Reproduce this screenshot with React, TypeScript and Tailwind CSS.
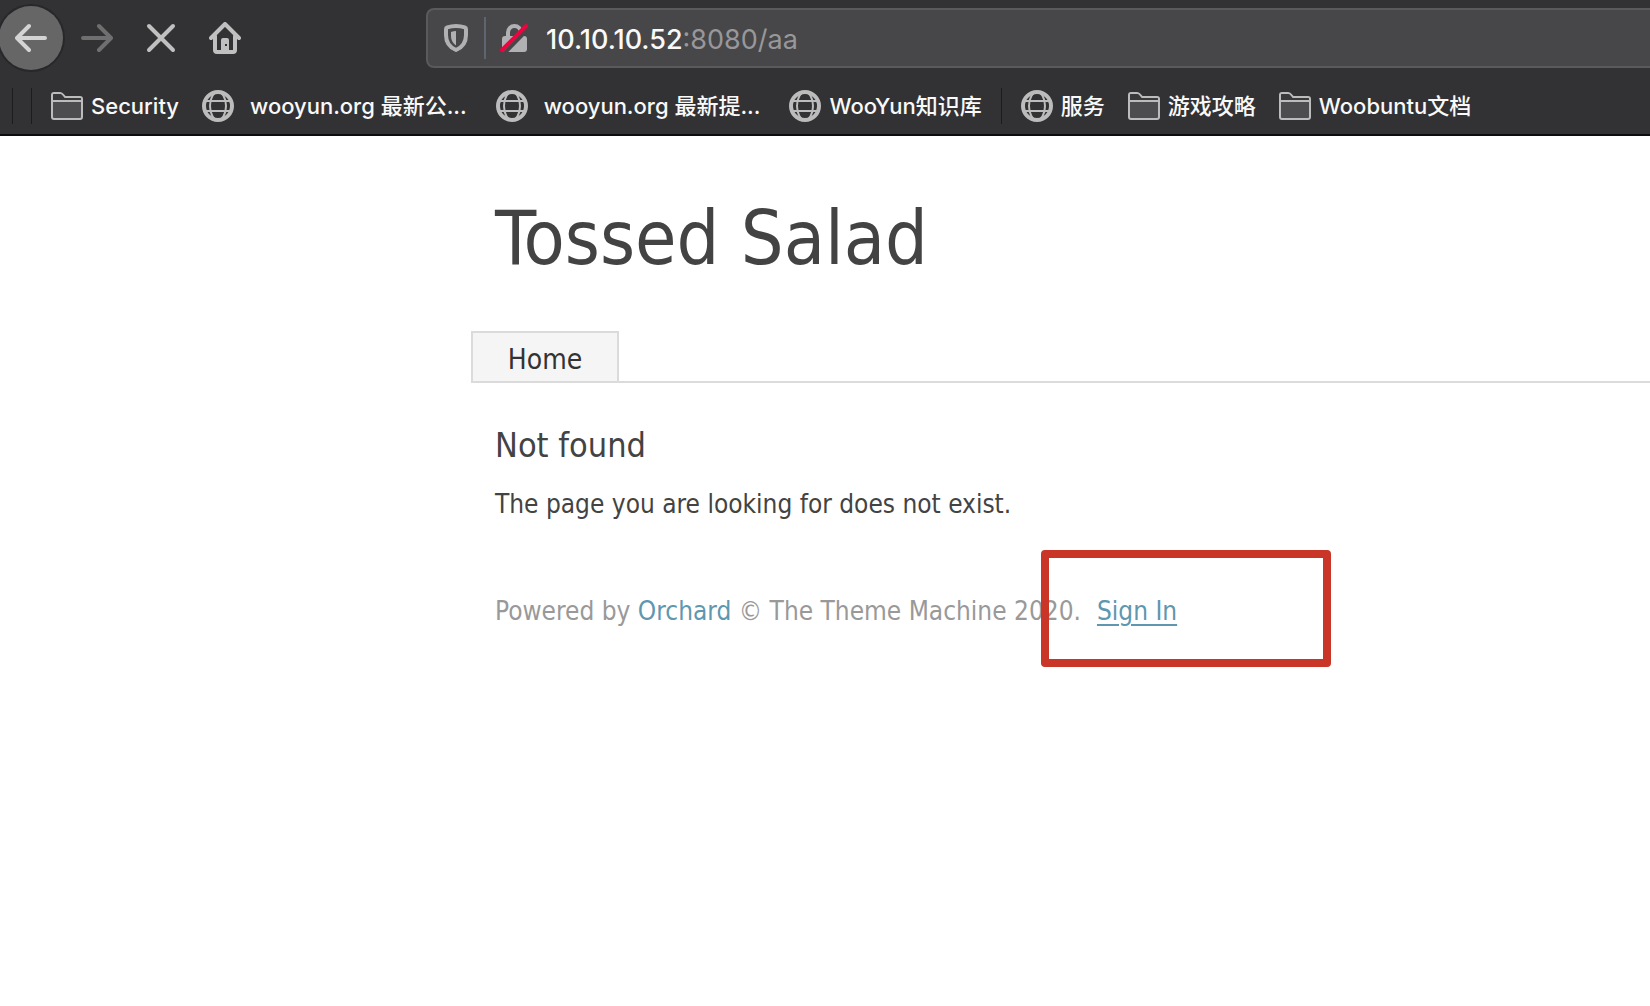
import type { ReactNode } from "react";

function BackArrow() {
  return (
    <svg viewBox="0 0 32 32" className="size-8" fill="none" stroke="currentColor" strokeWidth="4" strokeLinecap="round" strokeLinejoin="round" aria-hidden="true">
      <path d="M30 16H3M14 4L2 16l12 12" />
    </svg>
  );
}

function ForwardArrow() {
  return (
    <svg viewBox="0 0 32 32" className="size-8" fill="none" stroke="currentColor" strokeWidth="4" strokeLinecap="round" strokeLinejoin="round" aria-hidden="true">
      <path d="M2 16h26M18 4l12 12-12 12" />
    </svg>
  );
}

function StopIcon() {
  return (
    <svg viewBox="0 0 32 32" className="size-8" fill="none" stroke="currentColor" strokeWidth="4" strokeLinecap="round" aria-hidden="true">
      <path d="M4 4l24 24M28 4L4 28" />
    </svg>
  );
}

function HomeIcon() {
  return (
    <svg viewBox="0 0 32 32" className="size-8" fill="none" stroke="currentColor" strokeLinecap="round" strokeLinejoin="round" aria-hidden="true">
      <path d="M2 16L16 2l14 14" strokeWidth="4" />
      <path d="M6 14v14q0 2 2 2h16q2 0 2-2V14" strokeWidth="4" />
      <path fillRule="evenodd" d="M12 30V18q0-2 2-2h4q2 0 2 2v12zM16 22v2h2v-2z" fill="currentColor" stroke="none" />
    </svg>
  );
}

function ShieldIcon() {
  return (
    <svg viewBox="0 0 24 28" className="h-7 w-6" aria-hidden="true">
      <path d="M12 2C9 2 5.500 2.600 3.200 3.400Q2 3.800 2 5v6c0 8 4 12.500 10 15 6-2.500 10-7 10-15V5q0-1.200-1.200-1.600C18.500 2.600 15 2 12 2z" fill="none" stroke="#b1b1b3" strokeWidth="4" strokeLinejoin="round" />
      <path d="M12 7v14.500C8.500 19 7 16 7 12V8q2.500-.8 5-1z" fill="#b1b1b3" />
    </svg>
  );
}

function InsecureLockIcon() {
  return (
    <svg viewBox="0 0 30 30" className="size-[30px]" aria-hidden="true">
      <path d="M8 14V9.500a6.500 6.500 0 0 1 13 0V14" fill="none" stroke="#b1b1b3" strokeWidth="4" />
      <rect x="2" y="13" width="25" height="16" rx="3" fill="#b1b1b3" />
      <path d="M4.500 30L29 5" stroke="#474749" strokeWidth="4" />
      <path d="M2 27L26 3" stroke="#f3003f" strokeWidth="4" strokeLinecap="round" />
    </svg>
  );
}

function FolderIcon() {
  return (
    <svg viewBox="0 0 32 28" className="h-7 w-8 shrink-0" fill="#4d4d4f" stroke="#bcbcbd" strokeWidth="2" strokeLinejoin="round" aria-hidden="true">
      <path d="M1 9V3q0-2 2-2h6q1.500 0 2.500 1.200L14 5h15q2 0 2 2v18q0 2-2 2H3q-2 0-2-2z" />
      <path d="M1 9h30" />
      <path d="M2 8V3q0-1 1-1h6q1 0 2 1l2.500 3H29q1 0 1 1v1z" fill="#39393b" stroke="none" />
    </svg>
  );
}

function GlobeIcon() {
  return (
    <svg viewBox="0 0 32 32" className="size-8 shrink-0" fill="none" stroke="#bcbcbd" strokeWidth="2" aria-hidden="true">
      <circle cx="16" cy="16" r="14" strokeWidth="4" />
      <ellipse cx="16" cy="16" rx="8" ry="14" />
      <path d="M3 11h26M3 21h26" />
    </svg>
  );
}

function Bookmark({ icon, wide, children }: { icon: "folder" | "globe"; wide?: boolean; children: ReactNode }) {
  return (
    <a href="#" className={`flex items-center whitespace-nowrap ${wide ? "mr-1.5 gap-4" : "gap-2"}`}>
      {icon === "folder" ? <FolderIcon /> : <GlobeIcon />}
      <span>{children}</span>
    </a>
  );
}

export default function App() {
  return (
    <div className="min-h-screen overflow-x-hidden bg-white">
      <header className="border-b-2 border-[#0c0c0d] bg-[#323234] font-['Inter','Noto_Sans_CJK_SC',sans-serif] text-[#f9f9fa]">
        <div className="flex h-[76px] items-center">
          <nav aria-label="Navigation" className="flex w-[426px] shrink-0 items-center text-[#c0c0c1]">
            <button aria-label="Back" className="-ml-px flex size-16 items-center justify-center rounded-full bg-[#666667] text-[#d4d4d5] ring-2 ring-[#28282a]">
              <BackArrow />
            </button>
            <button aria-label="Forward" disabled className="flex size-16 items-center justify-center pl-1 text-[#6f6f70]">
              <ForwardArrow />
            </button>
            <button aria-label="Stop" className="flex size-16 items-center justify-center pl-1">
              <StopIcon />
            </button>
            <button aria-label="Home" className="flex size-16 items-center justify-center pl-1">
              <HomeIcon />
            </button>
          </nav>
          <div className="flex h-[60px] min-w-0 flex-1 items-center rounded-l-lg border-2 border-r-0 border-[#5a5a5c] bg-[#474749] pl-4">
            <ShieldIcon />
            <span className="mr-3.5 ml-4 h-[42px] w-0.5 bg-[#5c6570]" />
            <InsecureLockIcon />
            <div className="ml-4 flex min-w-0 flex-1 pt-1 text-[27px] leading-10">
              <label htmlFor="address" className="font-medium">10.10.10.52</label>
              <input id="address" defaultValue=":8080/aa" className="min-w-0 flex-1 bg-transparent text-[#98989a] outline-none" />
            </div>
          </div>
        </div>
        <nav aria-label="Bookmarks" className="flex h-[58px] items-center gap-[23px] pt-0.5 pl-3 text-[22px] font-medium">
          <span className="-mr-1 h-9 w-5 shrink-0 border-x border-[#1c1c1e]" />
          <Bookmark icon="folder">Security</Bookmark>
          <Bookmark icon="globe" wide>wooyun.org 最新公...</Bookmark>
          <Bookmark icon="globe" wide>wooyun.org 最新提...</Bookmark>
          <Bookmark icon="globe">WooYun知识库</Bookmark>
          <span className="-mx-1 h-9 w-px bg-[#1c1c1e]" />
          <Bookmark icon="globe">服务</Bookmark>
          <Bookmark icon="folder">游戏攻略</Bookmark>
          <Bookmark icon="folder">Woobuntu文档</Bookmark>
        </nav>
      </header>

      <div className="ml-[471px] font-['DejaVu_Sans_Condensed','Noto_Sans',sans-serif] text-[26px] text-[#434343]">
        <h1 className="pt-[50px] pl-6 text-[75px] leading-[104px] whitespace-nowrap">Tossed Salad</h1>
        <nav aria-label="Main" className="mt-[41px] flex border-b-2 border-[#dbdbdb]">
          <a href="#" className="flex h-[50px] w-[148px] items-center justify-center border-2 border-b-0 border-[#dbdbdb] bg-[#f5f5f5] pt-1.5 text-[28px] text-[#333]">
            Home
          </a>
        </nav>
        <main className="pl-6 whitespace-nowrap">
          <h2 className="mt-[38px] text-[34px] leading-12">Not found</h2>
          <p className="mt-[15px] leading-10">The page you are looking for does not exist.</p>
        </main>
        <footer className="flex pt-[67px] pl-6 leading-10 whitespace-nowrap text-[#999]">
          <span>
            Powered by <a href="#" className="text-[#5f97af]">Orchard</a> © The Theme Machine 2020.
          </span>
          <div className="relative ml-4">
            <a href="#" className="text-[#5f97af] underline decoration-2 underline-offset-4">Sign In</a>
            <div className="pointer-events-none absolute -top-[41px] -left-14 h-[117px] w-[290px] rounded border-8 border-[#c93526]" />
          </div>
        </footer>
      </div>
    </div>
  );
}
